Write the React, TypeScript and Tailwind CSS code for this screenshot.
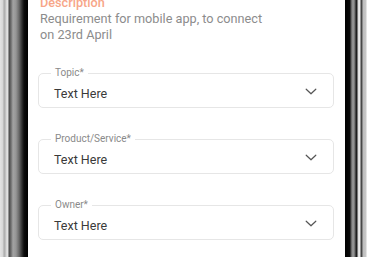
import React from 'react';

type FieldProps = {
  label: string;
  value: string;
};

// Outlined select with a floating label
const SelectField: React.FC<FieldProps> = ({ label, value }) => (
  <div className="relative h-[35px] rounded-[5px] border border-[#e6e6e6] flex items-center justify-between pl-[15px] pr-[16px]">
    <span className="absolute left-[12px] -top-[8px] bg-white px-[4px] text-[10px] leading-[14px] text-[#8a8a8a]">
      {label}
    </span>
    <span className="text-[12.5px] leading-[16px] text-[#3a3a3a] mt-[7px]">{value}</span>
    <svg width="12" height="7" viewBox="0 0 12 7" fill="none" className="mt-[1px]">
      <path d="M1.2 1.2l4.8 4.6 4.8-4.6" stroke="#555555" strokeWidth="1.2" strokeLinecap="round" strokeLinejoin="round" />
    </svg>
  </div>
);

const App: React.FC = () => {
  return (
    <div
      className="flex w-[373px] h-[257px] overflow-hidden bg-white"
      style={{ fontFamily: 'Roboto, "Noto Sans", sans-serif' }}
    >
      {/* left side of the phone body */}
      <div className="w-[28px] h-full shrink-0 bg-[linear-gradient(to_right,#e4e4e4_0px,#d6d6d6_3px,#a8a8a8_4px,#c9c9c9_6px,#e8e8e8_7px,#dcdcdc_8px,#4a4a4a_9px,#6e6e6e_11px,#a3a3a3_13px,#959595_16px,#6a6a6a_19px,#303030_22px,#0d0d0d_24px,#000000_28px)]" />

      {/* screen */}
      <div className="flex-1 flex flex-col">
        <div className="-mt-[5px] pl-[12px] pr-[8px]">
          <div className="text-[12.7px] leading-[16px] font-medium text-[#f7a688]">Description</div>
          <p className="mt-[0px] text-[12.7px] leading-[16px] text-[#8c8c8c]">
            Requirement for mobile app, to connect
            <br />
            on 23rd April
          </p>
        </div>
        <div className="flex flex-col gap-[31px] mt-[30px] pl-[10px] pr-[11px]">
          <SelectField label="Topic*" value="Text Here" />
          <SelectField label="Product/Service*" value="Text Here" />
          <SelectField label="Owner*" value="Text Here" />
        </div>
      </div>

      {/* right side of the phone body */}
      <div className="w-[28px] h-full shrink-0 bg-[linear-gradient(to_right,#000000_0px,#0a0a0a_5px,#5a5a5a_6px,#a0a0a0_8px,#6a6a6a_10px,#202020_11px,#1a1a1a_12px,#d8d8d8_13px,#f0f0f0_15px,#3a3a3a_16px,#555555_17px,#bdbdbd_18px,#c8c8c8_21px,#ffffff_22px,#ffffff_28px)]" />
    </div>
  );
};

export default App;
